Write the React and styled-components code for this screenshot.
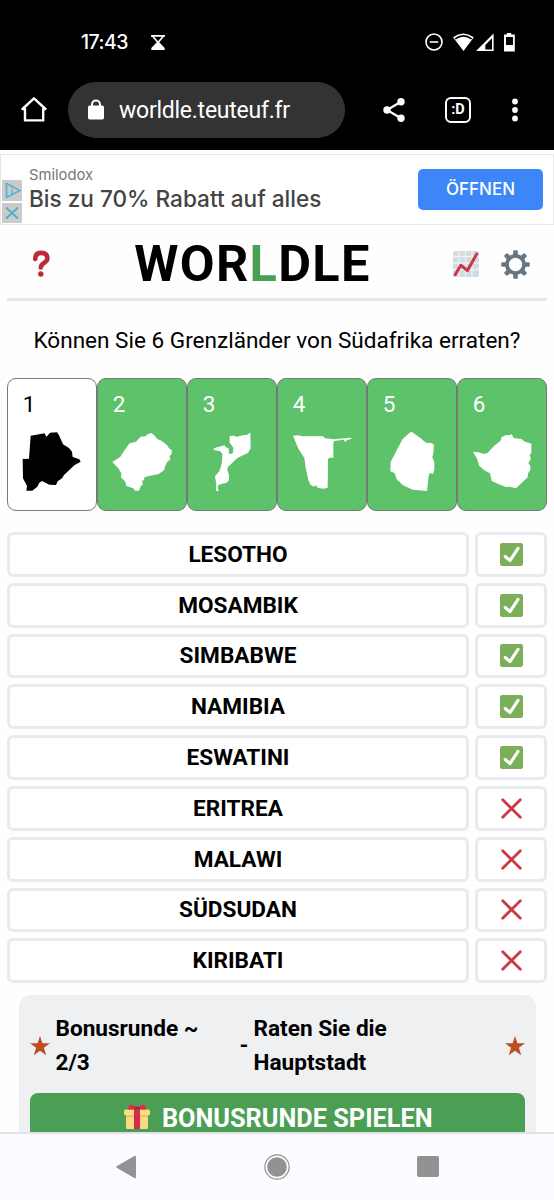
import React from "react";
import styled, { createGlobalStyle } from "styled-components";

const Global = createGlobalStyle`
  *, *::before, *::after { box-sizing: border-box; }
  body { margin: 0; background: #fff; font-family: Roboto, "Liberation Sans", sans-serif; color: #000; }
  svg { display: block; flex: none; }
`;

const Screen = styled.div`
  width: 554px;
  height: 1200px;
  display: flex;
  flex-direction: column;
  overflow: hidden;
  background: #fefefe;
`;

const StatusBar = styled.div`
  height: 68px;
  flex: none;
  background: #000;
  color: #fff;
  display: flex;
  align-items: flex-end;
  padding: 0 38px 13px 81px;
`;

const Clock = styled.span`
  font: 500 19.5px/26px Inter, sans-serif;
  letter-spacing: -0.5px;
  width: 70px;
  white-space: nowrap;
`;

const StatusIcons = styled.div`
  display: flex;
  align-items: center;
  justify-content: space-between;
  flex: 1;
  height: 26px;
`;

const BrowserBar = styled.div`
  height: 82px;
  flex: none;
  background: #000;
  color: #fff;
  display: flex;
  align-items: center;
  padding: 2px 20px 0 20px;
`;

const AddressBar = styled.div`
  width: 277px;
  height: 56px;
  border-radius: 28px;
  background: #333;
  margin: 0 37px 0 20px;
  padding-left: 20px;
  display: flex;
  align-items: center;
  gap: 15px;
  font-size: 23px;
  letter-spacing: -0.25px;
  white-space: nowrap;
`;

const Tools = styled.div`
  display: flex;
  align-items: center;
`;

const Page = styled.main`
  height: 982px;
  flex: none;
  overflow: hidden;
  display: flex;
  flex-direction: column;
`;

const Ad = styled.section`
  height: 71px;
  flex: none;
  margin-top: 4px;
  border: 1.5px solid #e8e8e8;
  background: #fff;
  display: flex;
  align-items: flex-start;
  padding: 0 10px 0 1px;
  font-family: Inter, sans-serif;
`;

const AdControls = styled.div`
  margin-top: 25px;
  display: flex;
  flex-direction: column;
  gap: 2px;
`;

const AdText = styled.div`
  margin: 10px 0 0 7px;
  white-space: nowrap;
`;

const Advertiser = styled.div`
  font-size: 14.8px;
  line-height: 20px;
  color: #777;
`;

const AdHeadline = styled.div`
  font-size: 22.6px;
  font-weight: 500;
  line-height: 28px;
  color: #444;
`;

const AdButton = styled.div`
  width: 125px;
  height: 41px;
  margin: 14px 0 0 auto;
  border-radius: 5px;
  background: #3c86f7;
  color: #fff;
  font: 500 17px/41px Inter, sans-serif;
  text-align: center;
`;

const Header = styled.header`
  height: 76px;
  flex: none;
  margin: 0 7px;
  padding: 0 17px 0 25px;
  border-bottom: 3px solid #e5e7e9;
  display: flex;
  align-items: center;
  justify-content: space-between;
`;

const Title = styled.h1`
  margin: 5px 0 0 1px;
  font-size: 50.5px;
  line-height: 60px;
  font-weight: 700;
  letter-spacing: 1.3px;
  white-space: nowrap;
  span { color: #4aa052; }
`;

const HeaderIcons = styled.div`
  display: flex;
  align-items: center;
  gap: 22px;
  margin-top: 5px;
`;

const Question = styled.p`
  margin: 25px 0 0;
  height: 34px;
  flex: none;
  line-height: 30px;
  font-size: 22.55px;
  text-align: center;
  white-space: nowrap;
`;

const Cards = styled.div`
  flex: none;
  margin: 18px 7px 0;
  display: grid;
  grid-template-columns: repeat(6, 1fr);
  height: 132.5px;
`;

const Card = styled.div`
  border: 1.3px solid #747a78;
  border-radius: 9px;
  background: ${(p) => (p.$solved ? "#5dc26a" : "#fff")};
  color: ${(p) => (p.$solved ? "#fff" : "#000")};
  padding: 10px 0 0 13.7px;
  font-size: 22.5px;
  line-height: 30px;
  svg { margin-top: 12.5px; }
  span { padding-left: 1px; }
`;

const Guesses = styled.div`
  flex: none;
  margin: 21.5px 7px 0;
  display: flex;
  flex-direction: column;
  gap: 6px;
`;

const Guess = styled.div`
  display: grid;
  grid-template-columns: 462px 72px;
  gap: 6px;
  height: 44.8px;
`;

const Cell = styled.div`
  border: 3px solid #e9eaee;
  border-radius: 6px;
  background: #fff;
  display: flex;
  align-items: center;
  justify-content: center;
  font-size: 22.6px;
  font-weight: 700;
`;

const Bonus = styled.section`
  flex: none;
  margin: 12px 18px 0 18.5px;
  padding: 17px 11px 40px;
  border-radius: 11px;
  background: #eff0f2;
`;

const BonusHeading = styled.div`
  display: flex;
  align-items: center;
  font-size: 22.6px;
  line-height: 34px;
  font-weight: 700;
  height: 68px;
`;

const BonusRound = styled.div`
  width: 184px;
  padding-left: 6px;
`;

const BonusTask = styled.div`
  width: 257px;
  padding: 0 90px 0 6px;
`;

const Dash = styled.div`
  width: 8px;
  margin-left: 6px;
`;

const PlayButton = styled.div`
  margin-top: 13px;
  height: 50px;
  padding-left: 2px;
  border-radius: 8px;
  background: #4b9f54;
  color: #fff;
  display: flex;
  align-items: center;
  justify-content: center;
  gap: 12px;
  font-size: 25.3px;
  font-weight: 700;
  white-space: nowrap;
  svg { margin-bottom: 2px; }
`;

const NavBar = styled.nav`
  height: 68px;
  flex: none;
  border-top: 2px solid #e2e1e8;
  background: #fcfbff;
  display: flex;
  align-items: center;
  justify-content: space-between;
  padding: 0 115.5px 1px 114.5px;
`;

const countries = [
  "M92 197L134 190L139 201L150 188L171 187L177 196L189 223L207 234L216 245L218 261L238 268L242 275L223 286L192 315L186 325L173 334L168 345L148 344L126 333L118 338L112 350L97 362H79L81 348L69 325L68 267L87 266Z",
  "M337 276L361 260L374 240L389 220L408 215L422 200L438 199L442 193L454 189L459 193L467 200L471 207L482 211L501 225L507 235L515 240V252L509 258L511 268L500 278L494 292L493 300L476 312L434 321L432 330L426 333L429 343L423 347L417 362H405L400 355L379 348L376 335L363 322L364 310L355 295Z",
  "M149 199L160 197L171 200L188 196L202 194L211 187L212 235L204 249L173 263L143 292L142 301L147 315L147 330L140 338L116 344L113 351L116 363H108L109 342L105 319L118 304L123 289L126 274L127 251L120 244L102 240L101 235L133 226L138 232L147 236L146 249L152 253L159 248L160 233L149 218Z",
  "M339 197L354 196L368 199L429 199L435 205L462 208L510 203L516 206L500 211L496 216L491 209L463 213L460 218V263H448L444 268L443 353L430 356L413 353L408 345L403 350L392 345L386 333L377 294L373 264L355 236Z",
  "M137 188L144 186L169 204L186 218L202 219L210 224L208 250L205 262L211 277V299L207 311L197 309L194 318L189 363L146 359L117 346L98 328L92 310L79 304L80 276L100 237L116 207Z",
  "M327 245L343 247L360 252L371 248L390 228L410 212L413 200L421 199L424 195L435 196L443 193L449 204L473 207L480 214L502 221V249L497 255L501 267L493 278L500 290L498 302L492 310L491 322L456 355L437 350L426 351L410 345L383 333L378 310L363 302L346 288L339 266Z",
];

const viewLefts = [66, 336, 66, 336, 54, 324];

const guesses = [
  ["LESOTHO", true], ["MOSAMBIK", true], ["SIMBABWE", true],
  ["NAMIBIA", true], ["ESWATINI", true], ["ERITREA", false],
  ["MALAWI", false], ["SÜDSUDAN", false], ["KIRIBATI", false],
];

const Hourglass = () => (
  <svg width="14" height="15" viewBox="0 0 14 15">
    <path d="M0 .9h14M1.5 1l5.5 6.5L12.5 1" fill="none" stroke="#fff" strokeWidth="1.6" />
    <path d="M7 6L13.7 13V15H.3V13Z" fill="#fff" />
  </svg>
);

const Signals = () => (
  <svg width="91" height="20" viewBox="425 32 91 20">
    <circle cx="434" cy="42" r="8" fill="none" stroke="#fff" strokeWidth="1.6" />
    <path d="M429.8 42h8.4" stroke="#fff" strokeWidth="1.6" />
    <path d="M453 37.2Q463 30 473.8 37.2L463.5 51Z" fill="#fff" />
    <path d="M455.2 38.9Q463.5 33 471.6 38.9" fill="none" stroke="#000" strokeWidth="1.7" />
    <path d="M476 51L493.6 33.5V51Z" fill="#fff" />
    <path d="M485.3 45L492 38.2V49.5H485.3Z" fill="#000" />
    <path d="M504 34.6h2.8V33h4.4v1.6h3.6V51.5H504Z" fill="#fff" />
    <path d="M506 37h7v8h-7z" fill="#000" />
  </svg>
);

const Home = () => (
  <svg width="28" height="28" viewBox="20 96 28 28" fill="none" stroke="#fff" strokeWidth="2.4" strokeLinejoin="round">
    <path d="M22.5 109L34 98.3L45.5 109H43.2V120.4H25V109Z" />
  </svg>
);

const Lock = () => (
  <svg width="16" height="23" viewBox="0 0 16 23">
    <path d="M4 8V5.5a4 4 0 0 1 8 0V8" fill="none" stroke="#fff" strokeWidth="2" />
    <rect y="6.5" width="16" height="14" rx="1.8" fill="#fff" />
  </svg>
);

const Share = () => (
  <svg width="24" height="26" viewBox="0 0 24 26">
    <path d="M19 4.8L5 13L19 21.2" fill="none" stroke="#fff" strokeWidth="2.2" />
    <circle cx="19" cy="4.8" r="3.7" fill="#fff" /><circle cx="5" cy="13" r="3.7" fill="#fff" /><circle cx="19" cy="21.2" r="3.7" fill="#fff" />
  </svg>
);

const TabSwitcher = styled.div`
  width: 26px;
  height: 26px;
  margin: 0 40px 0 39px;
  border: 2.4px solid #fff;
  border-radius: 6px;
  font: 700 14.5px/21px "Roboto", sans-serif;
  text-align: center;
`;

const More = () => (
  <svg width="8" height="24" viewBox="0 0 8 24" fill="#fff">
    <circle cx="4" cy="3.5" r="2.9" /><circle cx="4" cy="12" r="2.9" /><circle cx="4" cy="20.5" r="2.9" />
  </svg>
);

const AdChoices = () => (
  <svg width="20" height="21" viewBox="0 0 20 21">
    <path d="M0 0h20v21H0z" fill="#cbcbcb" />
    <path d="M4.5 3.5L18 10.5L4.5 17.5Z" fill="none" stroke="#5bb4cd" strokeWidth="1.9" strokeLinejoin="round" />
    <path d="M10 6.8v1.6M10 9.8v4.5" stroke="#5bb4cd" strokeWidth="1.6" />
  </svg>
);

const AdClose = () => (
  <svg width="20" height="20" viewBox="0 0 20 20">
    <path d="M0 0h20v20H0z" fill="#cbcbcb" />
    <path d="M4 4.5L16 15.5M16 4.5L4 15.5" stroke="#4eacc8" strokeWidth="1.7" />
  </svg>
);

const Help = () => (
  <svg width="19" height="28" viewBox="0 0 19 28">
    <path d="M3.2 9C3.2 5 5.6 2.9 9.4 2.9C13.2 2.9 15.4 4.9 15.4 8.2C15.4 13 8.8 12.6 8.8 17.4" fill="none" stroke="#bd2a38" strokeWidth="4.6" strokeLinecap="round" />
    <circle cx="8.8" cy="24" r="2.7" fill="#bd2a38" />
  </svg>
);

const HelpButton = styled.div`
  margin-top: 5px;
`;

const Chart = () => (
  <svg width="26" height="26" viewBox="0 0 26 26">
    <rect width="26" height="26" rx="1.5" fill="#d2dae2" />
    <path d="M0 5.5H26M0 12H26M0 18.5H26M6 0V26M12.5 0V26M19 0V26" stroke="#edf1f4" strokeWidth="1.3" />
    <path d="M2.2 23.7L7.8 14.2L14.5 19.5L23.7 3" fill="none" stroke="#c93748" strokeWidth="3" strokeLinecap="round" strokeLinejoin="round" />
  </svg>
);

const Gear = () => (
  <svg width="29" height="29" viewBox="-14.5 -14.5 29 29">
    <circle r="8.6" fill="none" stroke="#667580" strokeWidth="3.8" />
    {[0, 45, 90, 135, 180, 225, 270, 315].map((a) => (
      <rect key={a} x="-2.3" y="-14.3" width="4.6" height="5.5" rx="1.3" fill="#667580" transform={`rotate(${a})`} />
    ))}
  </svg>
);

const Check = () => (
  <svg width="23" height="23" viewBox="0 0 23 23">
    <rect width="23" height="23" rx="2.2" fill="#7caf5a" />
    <path d="M5.2 13.5L10 17.6L18 5.3" fill="none" stroke="#fff" strokeWidth="3.1" strokeLinecap="round" strokeLinejoin="round" />
  </svg>
);

const Cross = () => (
  <svg width="23" height="23" viewBox="0 0 23 23">
    <path d="M2.7 2.7L20.3 20.3M20.3 2.7L2.7 20.3" stroke="#cc3944" strokeWidth="2.8" strokeLinecap="round" />
  </svg>
);

const Star = () => (
  <svg width="20" height="20" viewBox="0 0 20 20">
    <path d="M10 0L12.4 7.2H20L13.9 11.8L16.2 19.2L10 14.7L3.8 19.2L6.1 11.8L0 7.2H7.6Z" fill="#be4d20" />
  </svg>
);

const Gift = () => (
  <svg width="26" height="26" viewBox="0 0 26 26">
    <path d="M2 10H24V23.5Q24 25 22.5 25H3.5Q2 25 2 23.5Z" fill="#fad985" />
    <rect y="5.5" width="26" height="6" rx="2" fill="#fddc86" />
    <path d="M2 11.5H24V13H2Z" fill="#efb962" />
    <path d="M10 5.5H16V25H10Z" fill="#d42c48" />
    <path d="M4 5.5Q4 0 9 1L12 3H14L17 1Q22 0 22 5.5Z" fill="#d9304a" />
    <path d="M10 5.5L11.5 2.8H14.5L16 5.5Z" fill="#a51e3c" />
  </svg>
);

const Back = () => (
  <svg width="22" height="24" viewBox="0 0 22 24">
    <path d="M20.2 1.5V22.5L2 12Z" fill="#929292" stroke="#929292" strokeWidth="1.5" strokeLinejoin="round" />
  </svg>
);

const HomeDot = () => (
  <svg width="26" height="26" viewBox="0 0 26 26">
    <circle cx="13" cy="13" r="12.1" fill="none" stroke="#929292" strokeWidth="1.2" />
    <circle cx="13" cy="13" r="9.8" fill="#929292" />
  </svg>
);

const Recents = styled.div`
  width: 22px;
  height: 21px;
  border-radius: 2px;
  background: #929292;
`;

export default function App() {
  return (
    <Screen>
      <Global />
      <StatusBar>
        <Clock>17:43</Clock>
        <StatusIcons><Hourglass /><Signals /></StatusIcons>
      </StatusBar>
      <BrowserBar>
        <Home />
        <AddressBar><Lock />worldle.teuteuf.fr</AddressBar>
        <Tools><Share /><TabSwitcher>:D</TabSwitcher><More /></Tools>
      </BrowserBar>
      <Page>
        <Ad>
          <AdControls><AdChoices /><AdClose /></AdControls>
          <AdText>
            <Advertiser>Smilodox</Advertiser>
            <AdHeadline>Bis zu 70% Rabatt auf alles</AdHeadline>
          </AdText>
          <AdButton>ÖFFNEN</AdButton>
        </Ad>
        <Header>
          <HelpButton><Help /></HelpButton>
          <Title>WOR<span>L</span>DLE</Title>
          <HeaderIcons><Chart /><Gear /></HeaderIcons>
        </Header>
        <Question>Können Sie 6 Grenzländer von Südafrika erraten?</Question>
        <Cards>
          {countries.map((d, i) => (
            <Card key={i} $solved={i > 0}>
              <span>{i + 1}</span>
              <svg width="60" height="60" viewBox={`${viewLefts[i]} 186 180 180`}>
                <path d={d} fill="currentColor" />
              </svg>
            </Card>
          ))}
        </Cards>
        <Guesses>
          {guesses.map(([name, correct]) => (
            <Guess key={name}>
              <Cell>{name}</Cell>
              <Cell>{correct ? <Check /> : <Cross />}</Cell>
            </Guess>
          ))}
        </Guesses>
        <Bonus>
          <BonusHeading>
            <Star />
            <BonusRound>Bonusrunde ~<br />2/3</BonusRound>
            <Dash>-</Dash>
            <BonusTask>Raten Sie die Hauptstadt</BonusTask>
            <Star />
          </BonusHeading>
          <PlayButton><Gift />BONUSRUNDE SPIELEN</PlayButton>
        </Bonus>
      </Page>
      <NavBar><Back /><HomeDot /><Recents /></NavBar>
    </Screen>
  );
}
